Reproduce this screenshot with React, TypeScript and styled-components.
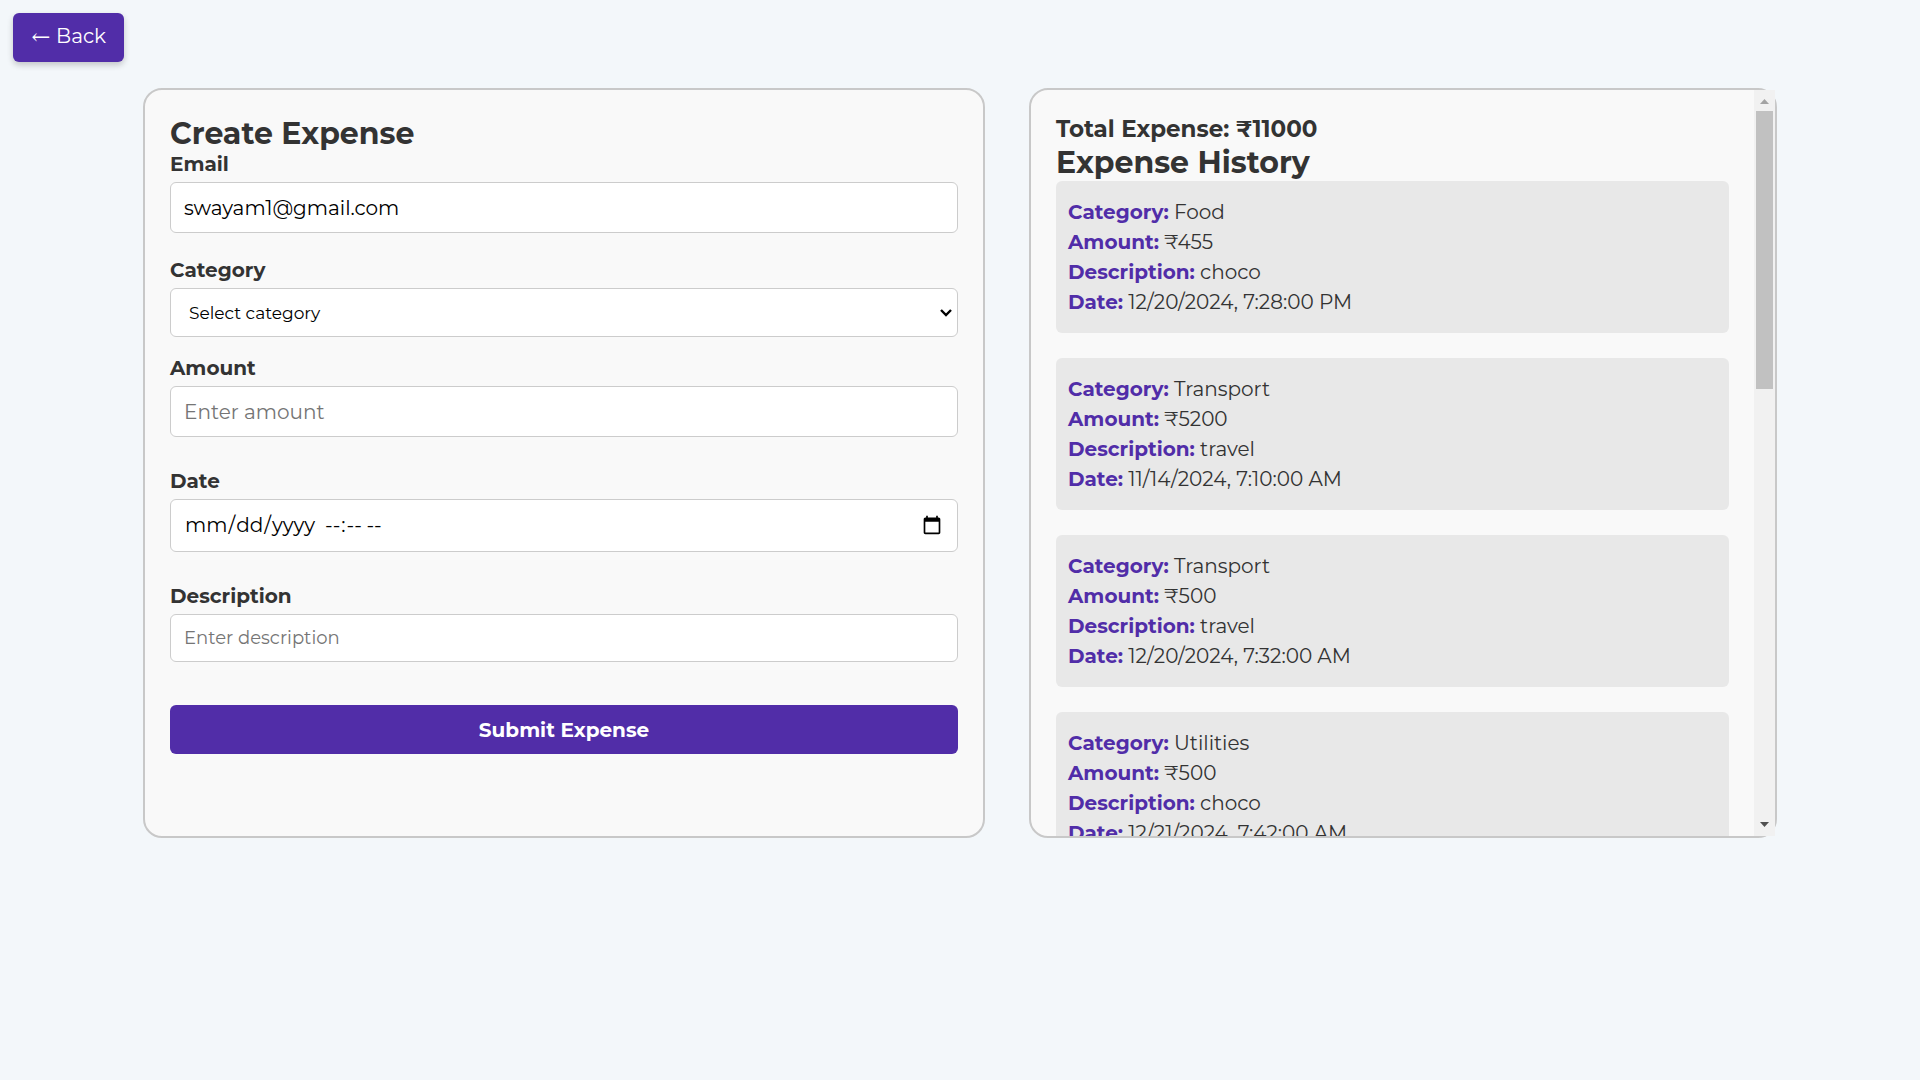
import React, { useEffect, useRef, useState } from "react";
import styled, { createGlobalStyle } from "styled-components";

const GlobalStyle = createGlobalStyle`
  *, *::before, *::after { box-sizing: border-box; }
  body {
    margin: 0;
    background: #f3f7fa;
    color: #333;
    font-family: Montserrat, Inter, "Noto Sans", sans-serif;
    font-size: 20px;
  }
  h2, h3, p, ul { margin: 0; padding: 0; }
  input, select, button { font-family: inherit; }
`;

const TopBar = styled.header`
  display: flex;
  padding: 13px;
`;

const BackButton = styled.button`
  height: 49px;
  padding: 0 18px 2px;
  border: 0;
  border-radius: 6px;
  background: #512da8;
  color: #fff;
  font-size: 20px;
  line-height: 24px;
  box-shadow: 0 3px 6px rgba(0, 0, 0, 0.2);
  cursor: pointer;
`;

const Arrow = styled.span`
  font-family: "DejaVu Math TeX Gyre", "Liberation Sans", Arial, sans-serif;
  font-size: 20px;
`;

const Columns = styled.main`
  display: grid;
  grid-template-columns: minmax(0, 842fr) minmax(0, 748fr);
  gap: 44px;
  padding: 13px 143px 0;
`;

const Panel = styled.section`
  height: 750px;
  border: 2px solid #c8c8c8;
  border-radius: 19px;
  background: #f9f9f9;
`;

const FormPanel = styled(Panel)`
  padding: 25px;
`;

const HistoryPanel = styled(Panel)`
  display: flex;
`;

const ScrollArea = styled.div`
  flex: 1;
  min-width: 0;
  padding: 25px;
  border-radius: 17px 0 0 17px;
  overflow-y: auto;
  scrollbar-width: none;
`;

const ScrollBar = styled.div`
  display: flex;
  flex-direction: column;
  width: 21px;
  background: #f1f1f1;
`;

const ScrollArrow = styled.svg`
  display: block;
  width: 21px;
  height: 21px;
`;

const ScrollTrack = styled.div`
  flex: 1;
  padding: 0 2px;
`;

const ScrollThumb = styled.div`
  background: #c1c1c1;
`;

const Title = styled.h2`
  font-size: 30px;
  line-height: 37px;
  font-weight: 700;
`;

const Total = styled.h3`
  font-size: 23px;
  line-height: 29px;
  font-weight: 700;
`;

const Form = styled.form`
  display: flex;
  flex-direction: column;
`;

const Field = styled.div<{ $after: number }>`
  display: flex;
  flex-direction: column;
  gap: 6px;
  margin-bottom: ${(p) => p.$after}px;
`;

const Label = styled.label`
  line-height: 24px;
  font-weight: 700;
`;

const Input = styled.input<{ $height?: number; $size?: number }>`
  width: 100%;
  height: ${(p) => p.$height ?? 51}px;
  padding: 0 13px;
  border: 1px solid #ccc;
  border-radius: 6px;
  background: #fff;
  color: #000;
  font-size: ${(p) => p.$size ?? 20}px;
  &::placeholder { color: #757575; }
`;

const DateBox = styled.div`
  display: flex;
  align-items: center;
  gap: 5px;
  height: 53px;
  padding: 0 15px 2px 13px;
  border: 1px solid #ccc;
  border-radius: 6px;
  background: #fff;
`;

const DatePart = styled.input`
  padding: 0;
  border: 0;
  outline: 0;
  background: none;
  color: #000;
  font-size: 20px;
  &[type="date"] { width: 135px; }
  &::-webkit-calendar-picker-indicator { display: none; }
`;

const PickerButton = styled.button`
  display: flex;
  margin-left: auto;
  padding: 0;
  border: 0;
  background: none;
  cursor: pointer;
`;

const Select = styled.select`
  appearance: none;
  width: 100%;
  height: 49px;
  padding: 0 18px;
  border: 1px solid #ccc;
  border-radius: 6px;
  background: #fff url("data:image/svg+xml,%3Csvg xmlns='http://www.w3.org/2000/svg' width='14' height='10' fill='none' stroke='%23000' stroke-width='2.4'%3E%3Cpath d='M2 2l5 5 5-5'/%3E%3C/svg%3E") right 4px center no-repeat;
  color: #000;
  font-size: 17px;
`;

const Submit = styled.button`
  height: 49px;
  border: 0;
  border-radius: 6px;
  background: #512da8;
  color: #fff;
  font-size: 20px;
  font-weight: 700;
  cursor: pointer;
`;

const List = styled.ul`
  list-style: none;
`;

const Item = styled.li`
  margin-bottom: 25px;
  padding: 16px 12px;
  border-radius: 6px;
  background: #e8e8e8;
  line-height: 30px;
`;

const Key = styled.strong`
  color: #512da8;
  font-weight: 700;
`;

const expenses = [
  { category: "Food", amount: 455, description: "choco", date: "12/20/2024, 7:28:00 PM" },
  { category: "Transport", amount: 5200, description: "travel", date: "11/14/2024, 7:10:00 AM" },
  { category: "Transport", amount: 500, description: "travel", date: "12/20/2024, 7:32:00 AM" },
  { category: "Utilities", amount: 500, description: "choco", date: "12/21/2024, 7:42:00 AM" },
  { category: "Food", amount: 745, description: "lunch", date: "12/21/2024, 1:15:00 PM" },
  { category: "Transport", amount: 600, description: "travel", date: "12/22/2024, 9:05:00 AM" },
  { category: "Utilities", amount: 1000, description: "water", date: "12/22/2024, 6:30:00 PM" },
  { category: "Food", amount: 500, description: "snacks", date: "12/23/2024, 5:20:00 PM" },
  { category: "Food", amount: 700, description: "dinner", date: "12/23/2024, 8:45:00 PM" },
  { category: "Transport", amount: 800, description: "travel", date: "12/24/2024, 7:50:00 AM" },
];

const total = expenses.reduce((sum, e) => sum + e.amount, 0);

const ARROW_HEIGHT = 21;

function ExpenseHistory() {
  const area = useRef<HTMLDivElement>(null);
  const [thumb, setThumb] = useState({ top: 0, height: 0 });

  const measure = () => {
    const el = area.current;
    if (!el) return;
    const track = el.clientHeight - 2 * ARROW_HEIGHT;
    setThumb({
      top: Math.round((el.scrollTop / el.scrollHeight) * track),
      height: Math.round((el.clientHeight / el.scrollHeight) * track),
    });
  };

  useEffect(() => {
    measure();
    window.addEventListener("resize", measure);
    return () => window.removeEventListener("resize", measure);
  }, []);

  return (
    <HistoryPanel>
      <ScrollArea ref={area} onScroll={measure}>
        <Total>Total Expense: ₹{total}</Total>
        <Title>Expense History</Title>
        <List>
          {expenses.map((e) => (
            <Item key={e.date}>
              <p><Key>Category:</Key> {e.category}</p>
              <p><Key>Amount:</Key> ₹{e.amount}</p>
              <p><Key>Description:</Key> {e.description}</p>
              <p><Key>Date:</Key> {e.date}</p>
            </Item>
          ))}
        </List>
      </ScrollArea>
      <ScrollBar aria-hidden="true">
        <ScrollArrow viewBox="0 0 21 21"><path d="M6 14h9l-4.5-5z" fill="#a3a3a3" /></ScrollArrow>
        <ScrollTrack>
          <ScrollThumb style={{ height: thumb.height, marginTop: thumb.top }} />
        </ScrollTrack>
        <ScrollArrow viewBox="0 0 21 21"><path d="M6 7h9l-4.5 5z" fill="#505050" /></ScrollArrow>
      </ScrollBar>
    </HistoryPanel>
  );
}

function DateTimeField() {
  const date = useRef<HTMLInputElement>(null);
  return (
    <DateBox>
      <DatePart ref={date} id="date" type="date" />
      <DatePart type="time" aria-label="Time" />
      <PickerButton type="button" aria-label="Show date picker" onClick={() => date.current?.showPicker()}>
        <svg width="20" height="20" viewBox="0 0 24 24">
          <path d="M20 3h-1V1h-2v2H7V1H5v2H4c-1.1 0-2 .9-2 2v16c0 1.1.9 2 2 2h16c1.1 0 2-.9 2-2V5c0-1.1-.9-2-2-2zm0 18H4V8h16v13z" />
        </svg>
      </PickerButton>
    </DateBox>
  );
}

export default function App() {
  return (
    <>
      <GlobalStyle />
      <TopBar>
        <BackButton type="button"><Arrow>←</Arrow> Back</BackButton>
      </TopBar>
      <Columns>
        <FormPanel>
          <Title>Create Expense</Title>
          <Form onSubmit={(e) => e.preventDefault()}>
            <Field $after={25}>
              <Label htmlFor="email">Email</Label>
              <Input id="email" type="email" defaultValue="swayam1@gmail.com" />
            </Field>
            <Field $after={19}>
              <Label htmlFor="category">Category</Label>
              <Select id="category" defaultValue="">
                <option value="">Select category</option>
                <option>Food</option>
                <option>Transport</option>
                <option>Utilities</option>
              </Select>
            </Field>
            <Field $after={32}>
              <Label htmlFor="amount">Amount</Label>
              <Input id="amount" type="number" placeholder="Enter amount" />
            </Field>
            <Field $after={32}>
              <Label htmlFor="date">Date</Label>
              <DateTimeField />
            </Field>
            <Field $after={43}>
              <Label htmlFor="description">Description</Label>
              <Input id="description" type="text" placeholder="Enter description" $height={48} $size={18} />
            </Field>
            <Submit type="submit">Submit Expense</Submit>
          </Form>
        </FormPanel>
        <ExpenseHistory />
      </Columns>
    </>
  );
}
